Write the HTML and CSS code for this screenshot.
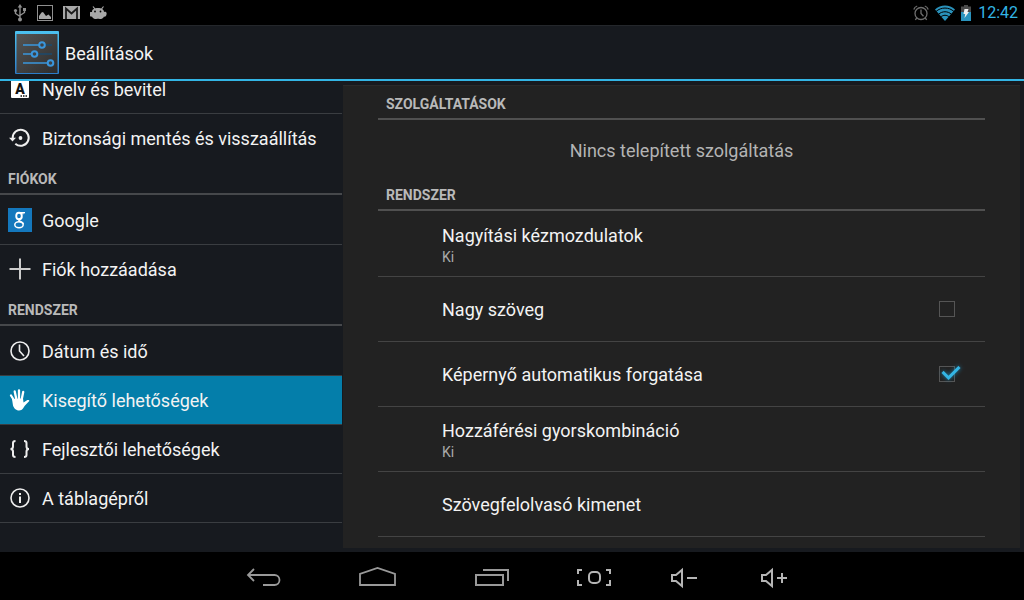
FILE: index.html
```html
<!DOCTYPE html>
<html lang="hu">
  <head>
    <meta charset="UTF-8" />
    <meta name="viewport" content="width=device-width, initial-scale=1.0" />
    <title>Beállítások</title>
    <link rel="stylesheet" href="styles.css">
  </head>
  <body>
    <div class="status-bar">
      <div class="status-left">
        <svg width="14" height="18" viewBox="0 0 14 18" fill="none" stroke="#8f8f8f" stroke-width="1.4">
          <path d="M7 2v13M2.500 7v2.500l4.500 3M11.500 6v2.500l-4.500 3" />
          <path d="M7 0l2.300 3.500H4.700z" fill="#8f8f8f" stroke="none" />
          <circle cx="2.500" cy="6.500" r="1.600" fill="#8f8f8f" stroke="none" />
          <rect x="10" y="4" width="3" height="3" fill="#8f8f8f" stroke="none" />
          <circle cx="7" cy="15.500" r="2" fill="#8f8f8f" stroke="none" />
        </svg>
        <svg width="16" height="16" viewBox="0 0 16 16">
          <rect x="0.500" y="0.500" width="15" height="15" fill="none" stroke="#8f8f8f" />
          <path d="M2 14v-3l2.500-3.500L6 7l3 4 2.500-1.500L14 12v2z" fill="#a8a8a8" />
        </svg>
        <svg width="17" height="13" viewBox="0 0 17 13">
          <rect width="17" height="13" fill="#a8a8a8" />
          <path d="M3 13V2.500l5.500 5L14 2.500V13" fill="none" stroke="#1a1a1a" stroke-width="1.800" />
        </svg>
        <svg width="18" height="14" viewBox="1 0 18 14">
          <path d="M4 0.500l2 2.500M14.500 0.500l-2 2.500" stroke="#a8a8a8" stroke-width="1.200" />
          <path d="M3 6c0-3 2.500-4 6-4s6 1.500 6 4c2-.5 3 .5 2.500 2.500S16 11 15 10.500c-.5 1.500-2 2.500-3 2.500-1 0-1.500-.3-3-.3s-2 .3-3 .3-2.500-1-3-2.500C1.500 11 .6 10 .3 8.500S1 5.500 3 6z" fill="#a8a8a8" />
          <circle cx="6" cy="5.500" r=".9" fill="#000" />
          <circle cx="11.500" cy="5.500" r=".9" fill="#000" />
        </svg>
      </div>
      <div class="status-right">
        <svg width="16" height="16" viewBox="0 0 16 16" fill="none" stroke="#6e6e6e" stroke-width="1.300">
          <circle cx="8" cy="8.500" r="6" />
          <path d="M8 4.500v4l2.500 2.800M.8 4.500C1.300 2.800 2.500 1.500 4.200 1M15.200 4.500C14.700 2.800 13.500 1.500 11.800 1M3.800 13l-1.500 1.800M12.200 13l1.500 1.800" />
        </svg>
        <svg width="20" height="16" viewBox="0 0 20 16">
          <path d="M0 4.500C5.500-.8 14.500-.8 20 4.500L10 16z" fill="#2a93bd" />
          <path d="M1 6.500c5-4.600 13-4.600 18 0M3.500 9.300c3.800-3.400 9.200-3.400 13 0M5.700 12c2.500-2.300 6.100-2.300 8.600 0" fill="none" stroke="#000" stroke-width="1" />
        </svg>
        <svg width="10" height="16" viewBox="0 0 10 16">
          <path d="M3 0h4v1.500h3V7H0V1.500h3z" fill="#4a4a4a" />
          <rect y="7" width="10" height="9" fill="#2a93bd" />
          <path d="M3.500 4h4L6.500 7H8l-4.500 6 .7-4H2.500z" fill="#f0f0f0" />
        </svg>
        <span class="clock">12:42</span>
      </div>
    </div>

    <header class="action-bar">
      <svg width="44" height="44" viewBox="0 0 44 44">
        <defs>
          <linearGradient id="tile" x1="0" y1="0" x2="1" y2="1">
            <stop offset="0" stop-color="#555" />
            <stop offset="1" stop-color="#2c2c2c" />
          </linearGradient>
          <linearGradient id="edge" x1="0" y1="0" x2="0" y2="1">
            <stop offset="0" stop-color="#4cc2f0" />
            <stop offset="1" stop-color="#2c7cc8" />
          </linearGradient>
        </defs>
        <rect width="44" height="43" rx="1" fill="url(#edge)" />
        <rect x="1.500" y="3" width="41" height="39" fill="url(#tile)" />
        <path d="M24 14h13M17 23h20M33 32h4" stroke="#1c4a6c" stroke-width="1.500" />
        <path d="M8 14h16M8 23h9M8 32h25" stroke="#3a96dc" stroke-width="1.700" />
        <g fill="#3c4248" stroke="#3a96dc" stroke-width="2">
          <circle cx="27" cy="14" r="2.800" />
          <circle cx="19.500" cy="23" r="2.800" />
          <circle cx="35.500" cy="32" r="2.800" />
        </g>
      </svg>
      <h1>Beállítások</h1>
    </header>

    <main class="content">
      <nav class="sidebar">
        <div class="side-list">
          <a class="side-item" href="#">
            <svg width="24" height="24" viewBox="0 0 24 24">
              <rect x="3" y="3" width="18" height="18" rx="1" fill="#fff" />
              <text x="12" y="17" class="key-letter">A</text>
              <path d="M12.500 19h1.500M15 19h1.500M17.500 19H19" stroke="#111" stroke-width="1.500" />
            </svg>
            <span>Nyelv és bevitel</span>
          </a>
          <a class="side-item" href="#">
            <svg width="24" height="24" viewBox="0 0 24 24" fill="none" stroke="#eee" stroke-width="2">
              <path d="M4.700 12a8 8 0 1 1 2.600 5.700" />
              <path d="M1 11.800h7l-3.500 3.700z" fill="#eee" stroke="none" />
              <circle cx="12.500" cy="12" r="1.900" fill="#eee" stroke="none" />
            </svg>
            <span>Biztonsági mentés és visszaállítás</span>
          </a>
          <h2>FIÓKOK</h2>
          <a class="side-item" href="#">
            <svg width="24" height="24" viewBox="0 0 24 24" fill="none" stroke="#fff">
              <rect width="24" height="24" fill="#1478bd" stroke="none" />
              <ellipse cx="11" cy="8" rx="2.800" ry="3.300" stroke-width="1.900" />
              <path d="M11 4.500h6l-1.500 1.200h-2" stroke-width="1" />
              <path d="M13.300 10c1.200-.5-3.500 1.800-2 3 1.500 1 3.700 1.500 4 3" stroke-width="1.700" />
              <ellipse cx="11" cy="16.800" rx="4.200" ry="3" stroke-width="1.500" />
            </svg>
            <span>Google</span>
          </a>
          <a class="side-item" href="#">
            <svg width="24" height="24" viewBox="0 0 24 24">
              <path d="M12 1.500v21M1.500 12h21" stroke="#ccc" stroke-width="2" />
            </svg>
            <span>Fiók hozzáadása</span>
          </a>
          <h2>RENDSZER</h2>
          <a class="side-item" href="#">
            <svg width="24" height="24" viewBox="0 0 24 24" fill="none" stroke="#eee" stroke-width="1.600">
              <circle cx="12" cy="12" r="9" />
              <path d="M11.500 5.500V12l4.500 5" />
            </svg>
            <span>Dátum és idő</span>
          </a>
          <a class="side-item selected" href="#">
            <svg width="24" height="24" viewBox="0 0 24 24">
              <path d="M6.500 13L3 7.500M8.500 12L6.700 3.500M11 12V2.300M13.500 12.500L15.200 4" stroke="#fff" stroke-width="2.300" stroke-linecap="round" />
              <path d="M4 11L15 10.500l.5 4 3.500-2.300c1-.5 2.800 0 2.300.9l-4.300 4.500c-1.500 2-2.500 4.900-5.800 4.900-3.500 0-5.300-2.600-6.200-5z" fill="#fff" />
            </svg>
            <span>Kisegítő lehetőségek</span>
          </a>
          <a class="side-item" href="#">
            <svg width="24" height="24" viewBox="0 0 24 24" fill="none" stroke="#eee" stroke-width="2">
              <path d="M7.500 4C5.300 4 5 4.800 5 6v3.500c0 1.500-.8 2.500-2.500 2.500 1.700 0 2.500 1 2.500 2.500V18c0 1.200.3 2 2.500 2M16 4c2.200 0 2.500.8 2.500 2v3.500c0 1.500.8 2.500 2.500 2.500-1.700 0-2.500 1-2.500 2.500V18c0 1.200-.3 2-2.500 2" />
            </svg>
            <span>Fejlesztői lehetőségek</span>
          </a>
          <a class="side-item" href="#">
            <svg width="24" height="24" viewBox="0 0 24 24">
              <circle cx="12" cy="12" r="9" fill="none" stroke="#eee" stroke-width="1.600" />
              <path d="M12 7v2M12 10.500v6.500" stroke="#eee" stroke-width="2" />
            </svg>
            <span>A táblagépről</span>
          </a>
        </div>
      </nav>

      <section class="panel">
        <h2>SZOLGÁLTATÁSOK</h2>
        <p class="empty">Nincs telepített szolgáltatás</p>
        <h2>RENDSZER</h2>
        <div class="pref-list">
          <a class="pref" href="#">
            <span class="pref-text">
              <span class="pref-title">Nagyítási kézmozdulatok</span>
              <span class="pref-summary">Ki</span>
            </span>
          </a>
          <label class="pref">
            <span class="pref-title">Nagy szöveg</span>
            <input type="checkbox" />
          </label>
          <label class="pref">
            <span class="pref-title">Képernyő automatikus forgatása</span>
            <input type="checkbox" checked />
          </label>
          <a class="pref" href="#">
            <span class="pref-text">
              <span class="pref-title">Hozzáférési gyorskombináció</span>
              <span class="pref-summary">Ki</span>
            </span>
          </a>
          <a class="pref" href="#">
            <span class="pref-title">Szövegfelolvasó kimenet</span>
          </a>
        </div>
      </section>
    </main>

    <div class="nav-bar">
      <button class="nav-main" aria-label="Vissza">
        <svg width="36" height="24" viewBox="0 0 36 24" fill="none" stroke="#999" stroke-width="1.800">
          <path d="M2 9h26.500a5 5 0 0 1 0 10H17" />
          <path d="M8 3L2 9l6 6" />
        </svg>
      </button>
      <button class="nav-main" aria-label="Kezdőképernyő">
        <svg width="38" height="24" viewBox="0 0 38 24" fill="none" stroke="#999" stroke-width="1.800">
          <path d="M1 19V8l17.500-6L36 8v11z" />
        </svg>
      </button>
      <button class="nav-main" aria-label="Legutóbbi alkalmazások">
        <svg width="36" height="24" viewBox="0 0 36 24" fill="none" stroke="#999" stroke-width="2">
          <path d="M2 9h27v10H2zM9 4h25v11" />
        </svg>
      </button>
      <button class="nav-small" aria-label="Képernyőkép">
        <svg width="36" height="24" viewBox="0 0 36 24" fill="none" stroke="#b5b5b5" stroke-width="2">
          <path d="M6 4H2v4M2 14v5h4M30 4h4v4M34 14v5h-4" />
          <rect x="13" y="6" width="11" height="11" rx="4" />
        </svg>
      </button>
      <button class="nav-small" aria-label="Hangerő le">
        <svg width="28" height="24" viewBox="0 0 28 24" fill="none" stroke="#b5b5b5" stroke-width="2">
          <path d="M2 9h4l6-5v16l-6-5H2zM17 12h10" />
        </svg>
      </button>
      <button class="nav-small" aria-label="Hangerő fel">
        <svg width="28" height="24" viewBox="0 0 28 24" fill="none" stroke="#b5b5b5" stroke-width="2">
          <path d="M2 9h4l6-5v16l-6-5H2zM17 12h10M22 7v10" />
        </svg>
      </button>
    </div>
  </body>
</html>
```
FILE: styles.css
```css
* {
  box-sizing: border-box;
}

body {
  margin: 0;
  height: 100vh;
  display: flex;
  flex-direction: column;
  overflow: hidden;
  background-color: #171a1f;
  color: #f3f3f3;
  font-family: Roboto, sans-serif;
  font-size: 18px;
}

h1,
h2,
p {
  margin: 0;
}

a {
  color: inherit;
  text-decoration: none;
}

svg {
  display: block;
  flex: none;
}

/* top bars */
.status-bar {
  height: 25px;
  flex: none;
  padding: 0 6px 0 13px;
  display: flex;
  align-items: center;
  justify-content: space-between;
  background-color: #000;
}

.status-left {
  display: flex;
  align-items: center;
  gap: 10px;
}

.status-right {
  display: flex;
  align-items: center;
  gap: 6px;
}

.clock {
  padding-left: 1px;
  color: #33b5e5;
  font-size: 16px;
}

.action-bar {
  height: 56px;
  flex: none;
  padding: 1px 15px 0;
  display: flex;
  align-items: center;
  gap: 6px;
  border-top: 1px solid #24272b;
  border-bottom: 2px solid #33b5e5;
}

.action-bar h1 {
  font-size: 18px;
  font-weight: 400;
}

.content {
  flex: 1;
  min-height: 0;
  display: flex;
  padding-right: 4px;
}

h2 {
  height: 33px;
  padding: 3px 8px 0;
  border-bottom: 2px solid #46484b;
  color: #b9b9b9;
  font-size: 14px;
  font-weight: 700;
  line-height: 28px;
}

/* left column */
.sidebar {
  width: 342px;
  flex: none;
  overflow: hidden;
}

/* the list is scrolled a little, so its first row is cut */
.side-list {
  margin-top: -17px;
  border-bottom: 1px solid #3a3d41;
}

.side-item {
  height: 49px;
  padding: 0 8px;
  display: flex;
  align-items: center;
  gap: 10px;
  border-top: 1px solid #3a3d41;
}

h2 + .side-item {
  border-top-color: transparent;
}

.side-item.selected {
  background-color: #047eaa;
}

.key-letter {
  fill: #111;
  font-size: 14px;
  font-weight: 900;
  text-anchor: middle;
}

/* right column */
.panel {
  flex: 1;
  margin: 4px 0 4px 1px;
  padding: 1px 35px 0;
  overflow: hidden;
  background-color: #222;
  border-top: 1px solid #2a2a2a;
}

.panel h2 {
  border-bottom-color: #505050;
}

.empty {
  height: 58px;
  padding-top: 4px;
  color: #b4b4b4;
  line-height: 54px;
  text-align: center;
}

.pref-list {
  border-bottom: 1px solid #444;
}

.pref {
  height: 65px;
  padding: 0 30px 0 64px;
  display: flex;
  align-items: center;
  justify-content: space-between;
  border-top: 1px solid #444;
}

.pref:first-child {
  border-top-color: transparent;
}

.pref-text {
  padding-top: 2px;
  display: flex;
  flex-direction: column;
  gap: 2px;
}

.pref-summary {
  color: #aaa;
  font-size: 14px;
  line-height: 18px;
}

.pref input {
  appearance: none;
  width: 16px;
  height: 16px;
  margin: 0;
  position: relative;
  border: 1px solid #555;
}

.pref input:checked::after {
  content: "";
  position: absolute;
  left: 6px;
  top: -5px;
  width: 7px;
  height: 14px;
  border: solid #33b5e5;
  border-width: 0 3px 3px 0;
  transform: rotate(45deg);
  filter: drop-shadow(0 0 2px #1a7fa8);
}

/* bottom keys */
.nav-bar {
  height: 48px;
  flex: none;
  padding: 3px 0 0 2px;
  display: flex;
  justify-content: center;
  background-color: #000;
}

.nav-bar button {
  padding: 0;
  display: flex;
  align-items: center;
  justify-content: center;
  border: none;
  background: none;
  cursor: pointer;
}

.nav-main {
  width: 114px;
}

.nav-small {
  width: 90px;
}
```
